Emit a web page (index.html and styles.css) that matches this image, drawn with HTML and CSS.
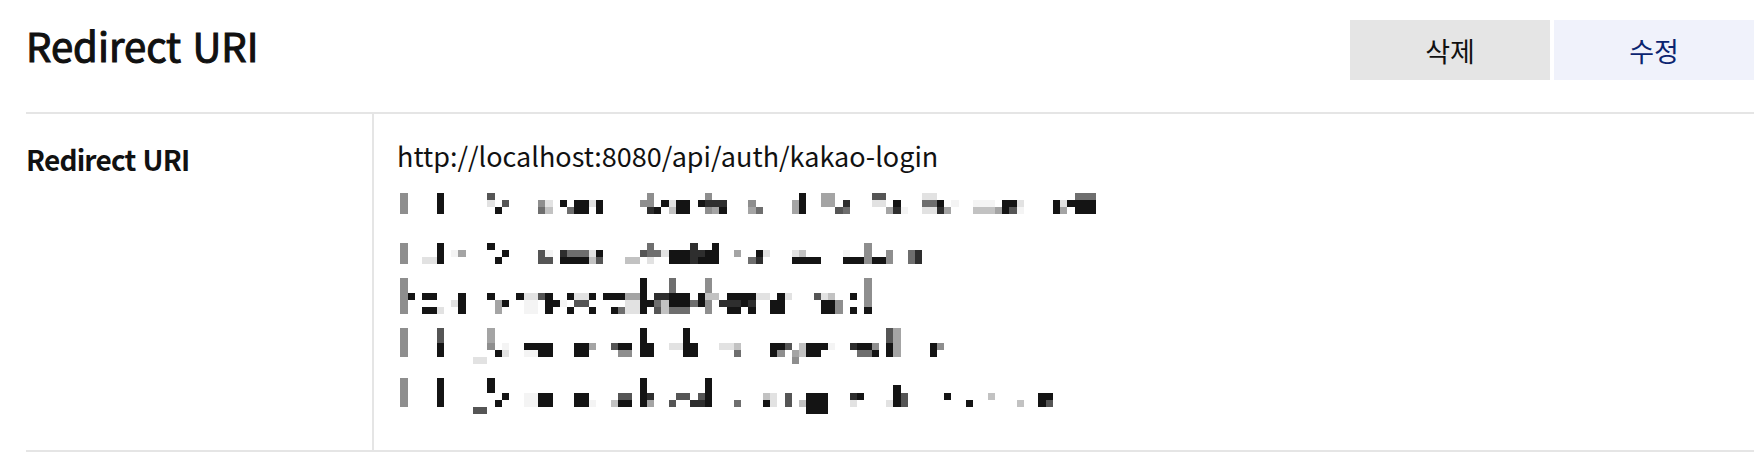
FILE: index.html
```html
<!DOCTYPE html>
<html lang="ko">
<head>
    <meta charset="UTF-8">
    <meta name="viewport" content="width=device-width, initial-scale=1.0">
    <title>Redirect URI</title>
    <link rel="stylesheet" href="styles.css">
</head>
<body>
    <div class="page">
        <!-- Section title with actions -->
        <div class="page-header">
            <h2 class="page-title">Redirect URI</h2>
            <div class="header-actions">
                <button class="btn btn-delete">삭제</button>
                <button class="btn btn-edit">수정</button>
            </div>
        </div>

        <!-- Registered URIs -->
        <div class="info-table">
            <div class="info-label">Redirect URI</div>
            <div class="info-value">
                <div class="uri-line" lang="en">http://localhost:8080/api/auth/kakao-login</div>
                <!-- Masked (pixelated) entries -->
                <div class="masked-line" data-offset="2" data-cells="1:eee 6:iii 13:gb. 14:..i 15:.g. 20:.ef 21:.bc 23:.i. 24:..f 25:.ii 26:.ii 27:.b. 28:.ii 34:.e. 35:eeh 36:..i 37:.i. 38:.bc 39:.ii 40:.ii 42:.i. 43:ehe 44:.hd 45:.hi 49:.ed 50:..f 55:.dd 56:iii 59:dd. 60:dd. 61:..g 62:.hf 66:gb. 67:gb. 68:..d 69:.ih 70:..a 73:bfb 74:bfb 75:.ih 76:..d 77:.a. 80:.ac 81:.ac 82:.ac 83:..d 84:.ii 85:.ig 86:.ba 91:.ii 92:.bd 93:.i. 94:fii 95:fii 96:fii"></div>
                <div class="masked-line" data-offset="2" data-cells="1:eee 4:..b 5:..b 6:iii 8:.a. 9:.d. 13:i.. 14:..i 15:.i. 20:.gg 21:.ag 23:.hi 24:.fi 25:.fi 26:.fi 27:.bc 28:.ig 32:..c 33:..c 34:.g. 35:ffb 36:.f. 37:.b. 38:.ii 39:.ii 40:.ii 41:hhh 42:.hi 43:.ii 44:iii 47:.d. 49:..f 50:.ih 51:.b. 55:.bi 56:.ci 57:..i 58:..i 62:.ai 63:..i 64:..i 65:eee 66:..i 67:..i 68:.ee 71:.ff 72:.hh"></div>
                <div class="masked-line" data-offset="0" data-cells="1:eeeee 2:..i.. 4:..i.i 5:..i.i 6:....b 8:...b. 9:..iii 13:..i.. 14:...dd 15:...i. 17:..i.. 18:..baa 19:..baa 20:..g.. 21:..iii 22:...i. 23:...a. 24:..i.i 25:..bg. 26:..bg. 27:..i.i 29:..i.. 30:..i.i 31:..i.f 32:..dbb 33:..dbb 34:iiiii 35:...i. 36:..hfg 37:..hcc 38:ffiif 39:..iif 40:..iif 41:...f. 42:..ii. 43:eecee 44:..c.. 45:...h. 46:..ihi 47:..ihi 48:..ii. 49:..ihi 50:..b.. 51:..b.. 52:...ii 53:..iii 54:..b.. 58:..g.. 59:..bii 60:..cii 61:...ee 63:..i.i 65:eeeei"></div>
                <div class="masked-line" data-offset="0" data-cells="1:eeee. 6:ggii. 11:....b 12:....b 13:dde.. 14:...i. 15:..ab. 18:..ia. 19:..ia. 20:..ii. 21:..ii. 25:..ii. 26:..ii. 27:..d.. 30:..g.. 31:..ie. 32:..ie. 34:iiii. 35:..ii. 38:..b.. 39:..b.. 40:iiii. 41:..ii. 45:..b.. 46:..b.. 47:..cf. 52:..ii. 53:..ie. 54:..g.. 55:...de 56:..cc. 57:..ii. 58:..ii. 59:..i.. 60:..a.. 63:..h.. 64:..if. 65:..if. 66:..ei. 68:ggii. 69:dddd. 74:..ii. 75:..e.."></div>
                <div class="masked-line" data-offset="0" data-cells="1:eeee. 6:iiii. 11:....g 12:....g 13:ii... 14:...i. 15:..i.. 18:..aa. 19:..aa. 20:..ii. 21:..ii. 25:..ii. 26:..ii. 27:...a. 30:...c. 31:..gi. 32:..gi. 34:iiii. 35:..hd. 38:...g. 39:..g.. 40:..g.. 41:...h. 42:..gh. 43:iiii. 47:...f. 51:..ci. 52:..bb. 54:..gg. 56:...c. 57:..iii 58:..iii 59:..iii 63:..hb. 64:..i.. 68:...b. 69:.iii. 70:..gg. 76:..i.. 79:...i. 82:..c.. 86:...c. 89:..ii. 90:..ig."></div>
            </div>
        </div>
    </div>
    <script>
        // Build the pixelated blocks for each masked entry
        document.querySelectorAll('.masked-line').forEach(function(line) {
            var offset = parseInt(line.dataset.offset);
            line.dataset.cells.split(' ').forEach(function(entry) {
                var parts = entry.split(':');
                var col = parseInt(parts[0]);
                var shades = parts[1];
                for (var r = 0; r < shades.length; r++) {
                    if (shades[r] === '.') continue;
                    var cell = document.createElement('span');
                    cell.className = 'px px-' + shades[r];
                    cell.style.gridColumn = (col + 1);
                    cell.style.gridRow = (r + offset + 1);
                    line.appendChild(cell);
                }
            });
        });
    </script>
</body>
</html>
```

FILE: styles.css
```css
body {
    margin: 0;
    font-family: "Noto Sans CJK KR", "Noto Sans", sans-serif;
    color: #111111;
    background-color: #FFFFFF;
}

.page {
    margin: 0 8px 0 26px;
}

/* Header: title on the left, buttons on the right */
.page-header {
    display: flex;
    justify-content: space-between;
    align-items: flex-start;
    height: 112px;
}

.page-title {
    margin: 0;
    padding-top: 25px;
    font-size: 40px;
    font-weight: 400;
    line-height: 40px;
    -webkit-text-stroke: 1.1px #111111; /* medium weight */
}

.header-actions {
    display: flex;
    gap: 4px;
    margin-top: 20px;
}

.btn {
    width: 200px;
    height: 60px;
    border: none;
    font-family: inherit;
    font-size: 27px;
    cursor: pointer;
}

.btn-delete {
    background-color: #e5e5e5;
    color: #111111;
}

.btn-edit {
    background-color: #f0f2fb;
    color: #0b2470; /* Navy */
}

/* Label / value table */
.info-table {
    display: grid;
    grid-template-columns: 346px 1fr;
    border-top: 2px solid #e5e5e5;
    border-bottom: 2px solid #e5e5e5;
}

.info-label {
    padding-top: 31px;
    font-size: 28px;
    font-weight: 700;
    line-height: 28px;
    letter-spacing: -0.8px;
}

.info-value {
    border-left: 2px solid #e5e5e5;
    padding: 19px 0 22px 19px;
}

.uri-line {
    padding-left: 4px;
    font-family: "Noto Sans CJK JP", "Noto Sans CJK KR", sans-serif;
    font-size: 27px;
    line-height: 45px;
}

/* Pixelated mask */
.masked-line {
    display: grid;
    grid-template-columns: repeat(100, 7.25px);
    grid-template-rows: repeat(5, 7.25px);
    height: 50px;
}

.px-a { background-color: #f4f4f4; }
.px-b { background-color: #e2e2e2; }
.px-c { background-color: #c2c2c2; }
.px-d { background-color: #a4a4a4; }
.px-e { background-color: #8e8e8e; }
.px-f { background-color: #6e6e6e; }
.px-g { background-color: #555555; }
.px-h { background-color: #2e2e2e; }
.px-i { background-color: #141414; }
```
